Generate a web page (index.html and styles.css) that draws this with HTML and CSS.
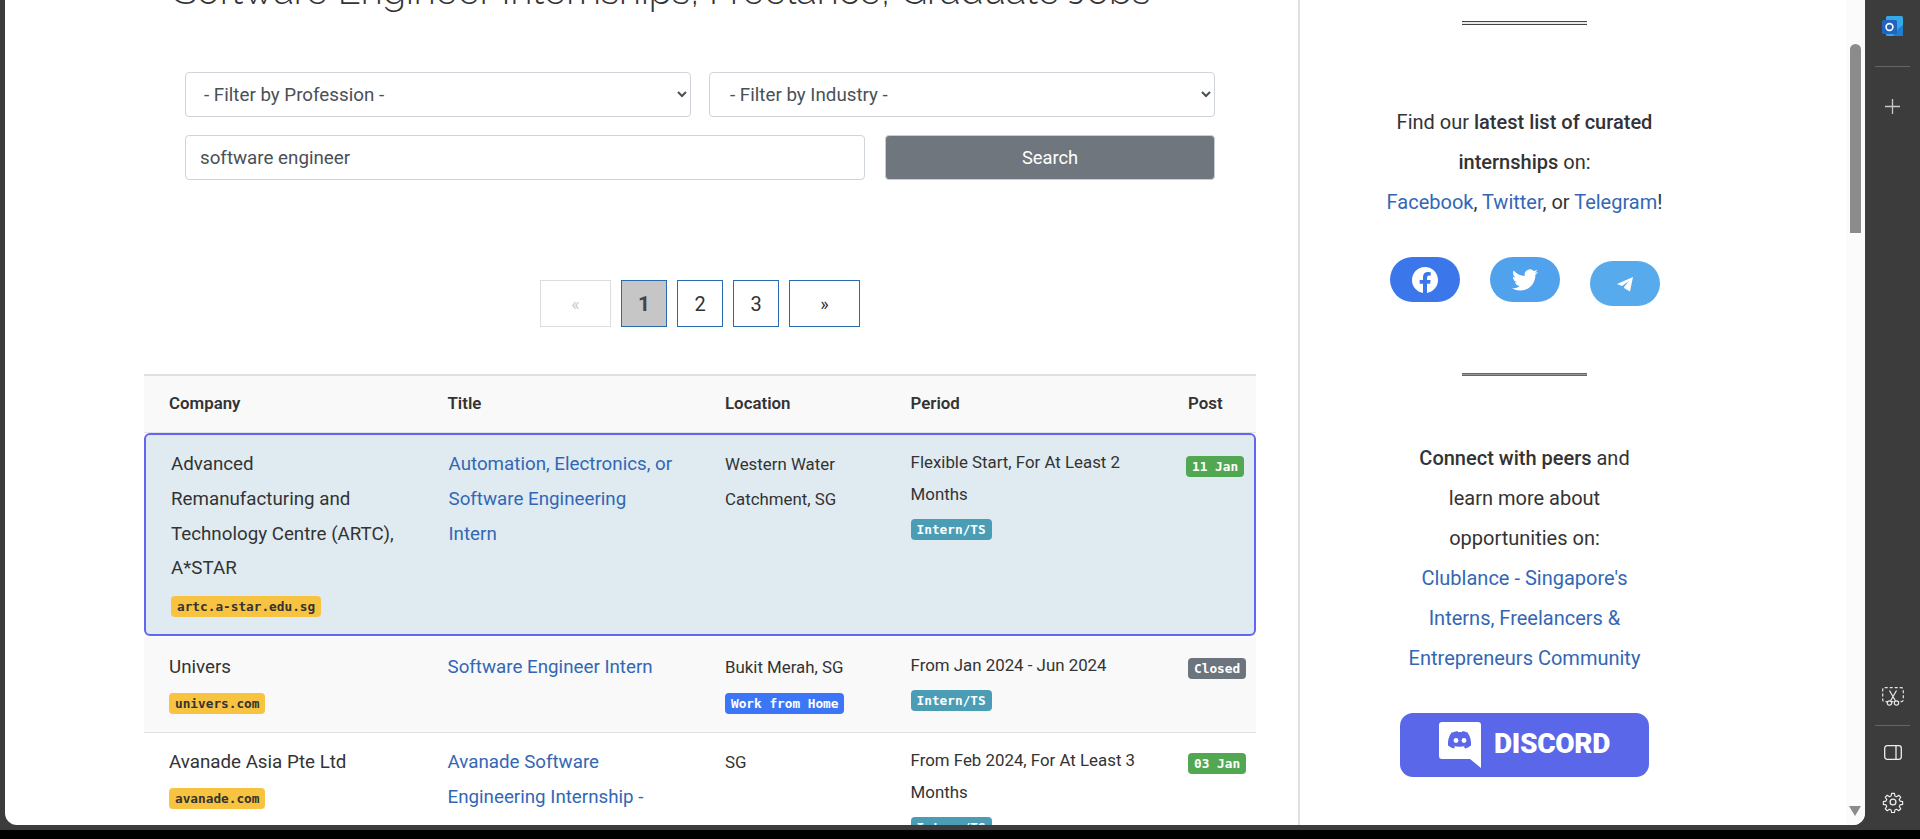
FILE: index.html
```html
<!DOCTYPE html>
<html lang="en">
<head>
<meta charset="utf-8">
<title>Software Engineer Internships, Freelance, Graduate Jobs</title>
<link rel="stylesheet" href="styles.css">
</head>
<body>
<div class="window">
  <div class="page">
    <main class="main">
      <h1 class="title">Software Engineer Internships, Freelance, Graduate Jobs</h1>
      <form class="filters">
        <div class="filter-row">
          <select class="field"><option>- Filter by Profession -</option></select>
          <select class="field field-right"><option>- Filter by Industry -</option></select>
        </div>
        <div class="search-row">
          <input class="field field-text" type="text" value="software engineer">
          <button class="search-btn" type="button">Search</button>
        </div>
      </form>
      <nav class="pager">
        <span class="pg pg-wide pg-off">«</span>
        <span class="pg pg-on">1</span>
        <span class="pg">2</span>
        <span class="pg">3</span>
        <span class="pg pg-wide">»</span>
      </nav>
      <section class="jobs">
        <div class="row head">
          <div>Company</div><div>Title</div><div>Location</div><div>Period</div><div>Post</div>
        </div>
        <div class="row hot">
          <div class="company">Advanced Remanufacturing and Technology Centre (ARTC), A*STAR<span class="tag tag-y">artc.a-star.edu.sg</span></div>
          <div class="job"><a href="#">Automation, Electronics, or Software Engineering Intern</a></div>
          <div class="loc">Western Water Catchment, SG</div>
          <div class="period">Flexible Start, For At Least 2 Months<span class="tag tag-c">Intern/TS</span></div>
          <div class="post"><span class="tag tag-g">11 Jan</span></div>
        </div>
        <div class="row alt">
          <div class="company">Univers<span class="tag tag-y">univers.com</span></div>
          <div class="job"><a href="#">Software Engineer Intern</a></div>
          <div class="loc">Bukit Merah, SG<span class="tag tag-b">Work from Home</span></div>
          <div class="period">From Jan 2024 - Jun 2024<span class="tag tag-c">Intern/TS</span></div>
          <div class="post"><span class="tag tag-k">Closed</span></div>
        </div>
        <div class="row">
          <div class="company">Avanade Asia Pte Ltd<span class="tag tag-y">avanade.com</span></div>
          <div class="job"><a href="#">Avanade Software Engineering Internship - Sap S/4 Hana</a></div>
          <div class="loc">SG</div>
          <div class="period">From Feb 2024, For At Least 3 Months<span class="tag tag-c">Intern/TS</span></div>
          <div class="post"><span class="tag tag-g">03 Jan</span></div>
        </div>
      </section>
    </main>
    <aside class="side">
      <hr class="rule">
      <div class="side-copy first">
        <p class="para">Find our <b>latest list of curated internships</b> on:</p>
        <p class="para"><a href="#">Facebook</a>, <a href="#">Twitter</a>, or <a href="#">Telegram</a>!</p>
      </div>
      <div class="socials">
        <a class="soc soc-fb" href="#" aria-label="Facebook">
          <svg width="26" height="26" viewBox="0 0 24 24"><path fill="#fff" d="M24 12.07C24 5.4 18.63 0 12 0S0 5.4 0 12.07c0 6.03 4.39 11.02 10.13 11.93v-8.44H7.08v-3.49h3.05V9.41c0-3.02 1.79-4.69 4.53-4.69 1.31 0 2.68.24 2.68.24v2.96h-1.51c-1.49 0-1.96.93-1.96 1.89v2.26h3.33l-.53 3.49h-2.8V24C19.61 23.09 24 18.1 24 12.07z"/></svg>
        </a>
        <a class="soc soc-tw" href="#" aria-label="Twitter">
          <svg width="26" height="26" viewBox="0 0 24 24"><path fill="#fff" d="M23.95 4.57a10 10 0 0 1-2.82.77 4.96 4.96 0 0 0 2.16-2.72c-.95.55-2 .96-3.13 1.18a4.92 4.92 0 0 0-8.38 4.48C7.69 8.1 4.07 6.13 1.64 3.16a4.82 4.82 0 0 0-.66 2.47c0 1.71.87 3.21 2.19 4.1a4.9 4.9 0 0 1-2.23-.62v.06a4.92 4.92 0 0 0 3.95 4.83 5 5 0 0 1-2.21.08 4.94 4.94 0 0 0 4.6 3.42A9.87 9.87 0 0 1 0 19.54a14 14 0 0 0 7.56 2.21c9.05 0 14-7.5 14-13.98 0-.21 0-.42-.02-.63a9.94 9.94 0 0 0 2.46-2.55z"/></svg>
        </a>
        <a class="soc soc-tg" href="#" aria-label="Telegram">
          <svg width="18" height="18" viewBox="0 0 18 18"><path fill="#fff" d="M17 2 1 9l5 2 7-5-5 6v1l6 3.5z"/></svg>
        </a>
      </div>
      <hr class="rule rule-low">
      <div class="side-copy second">
        <p class="para"><b>Connect with peers</b> and learn more about opportunities on:</p>
        <p class="para"><a href="#">Clublance - Singapore's Interns, Freelancers &amp; Entrepreneurs Community</a></p>
      </div>
      <a class="discord" href="#">
        <span class="bubble">
          <svg width="42" height="46" viewBox="0 0 42 46"><path fill="#fff" d="M3 0h36a3 3 0 0 1 3 3v43l-11-9H3a3 3 0 0 1-3-3V3a3 3 0 0 1 3-3z"/><path fill="#5a67e8" d="M13.500 10.500c2-.9 4-1.400 5-1.500l.6 1.200c1.300-.2 2.500-.2 3.800 0l.6-1.200c1 .1 3 .6 5 1.500 2.800 4 3.900 8.500 3.500 13-2 1.500-4 2.500-6 3l-1.200-2c1-.4 1.500-.7 2-1.100-4 1.900-8.500 1.900-12.600 0 .5.400 1 .700 2 1.100l-1.200 2c-2-.5-4-1.500-6-3-.4-4.500.7-9 3.500-13z"/><circle cx="17" cy="18.500" r="2.400" fill="#fff"/><circle cx="25" cy="18.500" r="2.400" fill="#fff"/></svg>
        </span>
        <span class="discord-word">DISCORD</span>
      </a>
    </aside>
    <div class="scrollbar">
      <span class="thumb"></span>
      <span class="arrow"></span>
    </div>
  </div>
  <div class="rail">
    <div class="rail-top">
      <svg width="22" height="21" viewBox="0 0 22 21"><rect x="4" y="0" width="17" height="20" rx="1.500" fill="#35a8e8"/><path d="M11 20h10v-11l-5 4z" fill="#1e7fd0"/><rect x="0" y="4" width="15" height="14" rx="1.500" fill="#2263bf"/><circle cx="7.500" cy="11" r="3.400" fill="none" stroke="#fff" stroke-width="1.600"/></svg>
      <span class="rail-line"></span>
      <svg width="15" height="15" viewBox="0 0 15 15"><path d="M7.500 0v15M0 7.500h15" stroke="#c9c9c9" stroke-width="1.300"/></svg>
    </div>
    <div class="rail-bottom">
      <svg width="22" height="19" viewBox="0 0 22 19" fill="none" stroke="#e6e6e6" stroke-width="1.200"><rect x=".7" y=".7" width="20.600" height="14" rx="2" stroke-dasharray="3 2"/><path d="M7.500 3.500 13.500 14M14.500 3.500 8.500 14"/><circle cx="7.500" cy="16" r="2.200" fill="#3c3c3c"/><circle cx="14.500" cy="16" r="2.200" fill="#3c3c3c"/></svg>
      <span class="rail-line"></span>
      <svg width="18" height="15" viewBox="0 0 18 15" fill="none" stroke="#eee" stroke-width="1.300"><rect x=".7" y=".7" width="16.600" height="13.600" rx="2.500"/><path d="M12 .7v13.600"/></svg>
      <svg width="22" height="22" viewBox="0 0 24 24" fill="none" stroke="#eee" stroke-width="1.400" stroke-linejoin="round"><circle cx="12" cy="12" r="3.200"/><path d="M10.300 1.500h3.400l.6 3.200 2 .9 2.700-1.800 2.400 2.400-1.800 2.700.9 2 3.200.6v3.400l-3.200.6-.9 2 1.800 2.700-2.400 2.400-2.700-1.800-2 .9-.6 3.200h-3.400l-.6-3.200-2-.9-2.700 1.800-2.400-2.400 1.800-2.700-.9-2-3.200-.6v-3.400l3.200-.6.9-2-1.800-2.700 2.400-2.400 2.700 1.800 2-.9z" transform="translate(1.200 1.200) scale(.9)"/></svg>
    </div>
  </div>
</div>
</body>
</html>
```
FILE: styles.css
```css
* { box-sizing: border-box; }
html, body { margin: 0; height: 100%; overflow: hidden; background: #000; }
body { font-family: Roboto, "Liberation Sans", sans-serif; font-size: 18.750px; color: #333; }
a { color: #3367b5; text-decoration: none; }

.window { height: 830px; display: flex; background: #3c3c3c; padding: 0 0 5px 5px; }
.page { flex: 0 0 1860px; height: 825px; background: #fff; display: flex; overflow: hidden; border-radius: 0 0 12px 12px; }

.main { flex: 0 0 1295px; padding-left: 139px; border-right: 2px solid #e0e0e0; height: 100%; overflow: hidden; }
.title { margin: -29px 0 0 30px; font-family: Raleway, Lato, sans-serif; font-weight: 300; font-size: 37.950px; line-height: 40px; color: #333; white-space: nowrap; }

.filters { margin: 61px 0 0 41px; width: 1030px; display: flex; flex-direction: column; gap: 18px; }
.filter-row { display: grid; grid-template-columns: 1fr 1fr; gap: 18px; }
.search-row { display: flex; gap: 20px; }
.field { height: 45px; flex: 1 1 0; min-width: 0; border: 1px solid #ced4da; border-radius: 4px; background: #fff; font: inherit; color: #495057; padding: 0 14px; }
.field-right { padding-left: 16px; }
.field-text { flex: 0 0 680px; }
.search-btn { flex: 1 1 0; height: 45px; background: #6f767d; color: #fff; border: 1px solid #c9ccd0; border-radius: 4px; font: inherit; font-size: 18.300px; }

.pager { margin-top: 100px; display: flex; justify-content: center; gap: 10px; width: 1112px; }
.pg { width: 46px; height: 47px; border: 1px solid #2a6ab0; display: flex; align-items: center; justify-content: center; color: #333; font-size: 20px; }
.pg-wide { width: 71px; font-size: 18px; }
.pg-off { border-color: #ddd; color: #ccc; }
.pg-on { background: #c6c6c6; font-weight: 700; font-size: 21px; color: #444; }

.jobs { margin-top: 47px; width: 1112px; border-top: 2px solid #e0e0e0; }
.row { display: grid; grid-template-columns: 278.500px 277.500px 185.600px 277.500px 1fr; padding: 12px 0 12px; border-bottom: 1px solid #e2e2e2; line-height: 34.800px; }
.row > div { padding-left: 25px; min-width: 0; padding-right: 25px; }
.head { height: 57px; background: #f9f9f9; padding: 0 0 2px; align-items: center; font-size: 16.850px; font-weight: 600; }
.alt { background: #f9f9f9; height: 96px; padding-top: 13px; }
.hot { height: 203px; margin-bottom: 1px; background: #dfebf1; border: 2px solid #6366f1; border-radius: 6px; padding: 12px 0 0; }
.hot .job { margin-left: -1px; }
.hot .loc { margin-left: -2px; }
.hot .period { margin-left: -2px; }
.hot .post { margin-left: -4px; }
.loc { font-size: 16.850px; }
.row > .loc { padding-right: 20px; }
.period { font-size: 16.850px; line-height: 31.500px; }
.row > .post { padding-right: 0; }

.tag { display: block; width: max-content; height: 21px; margin-top: 8.500px; padding: 0 6px; border-radius: 4px; font-family: "DejaVu Sans Mono", "Liberation Mono", monospace; font-size: 12.750px; line-height: 21px; font-weight: 700; }
.tag-y { background: #f7c341; color: #333; }
.tag-c { background: #4a9db5; color: #fff; margin-top: 8.500px; }
.tag-g { background: #52a852; color: #fff; margin-top: 7.800px; }
.tag-b { background: #3b76f6; color: #fff; }
.tag-k { background: #6c757d; color: #fff; margin-top: 7.800px; }
.hot .tag-g { margin-top: 9px; }
.hot .tag-y { margin-top: 9.500px; }

.side { flex: 0 0 449px; display: flex; flex-direction: column; align-items: center; height: 100%; padding: 21px 0 0 0; }
.rule { width: 125px; height: 4px; margin: 0; border: 0; border-top: 1px solid #444; border-bottom: 1px solid #444; background: #e8e8e8; flex: none; }
.rule-low { margin-top: 67px; height: 3px; background: #999; border-color: #666; }
.side-copy { width: 300px; text-align: center; font-size: 20px; line-height: 40px; }
.side-copy b { font-weight: 500; }
.side-copy.first { margin-top: 77px; }
.side-copy.second { margin-top: 62px; width: 250px; }
.para { margin: 0; }
.para a { white-space: nowrap; }
.second .para a { white-space: normal; }
.socials { margin-top: 35px; display: flex; gap: 30px; align-items: flex-start; }
.soc { width: 70px; height: 45px; border-radius: 23px; display: flex; align-items: center; justify-content: center; }
.soc-fb { background: #3b77ea; }
.soc-tw { background: #50a2ec; }
.soc-tg { background: #57aaeb; margin-top: 4px; }
.discord { margin-top: 35px; width: 249px; height: 64px; border-radius: 13px; background: #5a67e8; display: flex; align-items: flex-start; padding: 9px 0 0 39px; gap: 13px; }
.bubble { display: block; width: 42px; height: 46px; line-height: 0; }
.discord-word { font-family: Roboto, sans-serif; font-weight: 900; font-size: 28px; line-height: 20px; margin-top: 12px; color: #fff; letter-spacing: -.300px; }

.scrollbar { flex: 0 0 19px; margin-left: auto; background: #fbfbfb; position: relative; }
.thumb { position: absolute; left: 4px; top: 44px; width: 11px; height: 189px; border-radius: 6px 6px 0 0; background: #8b8b8b; }
.arrow { position: absolute; left: 3px; bottom: 9px; width: 0; height: 0; border-left: 6px solid transparent; border-right: 6px solid transparent; border-top: 10px solid #8b8b8b; }

.rail { flex: 1 1 auto; display: flex; flex-direction: column; justify-content: space-between; align-items: center; height: 825px; padding: 16px 0 12px; }
.rail-top, .rail-bottom { display: flex; flex-direction: column; align-items: center; }
.rail-line { width: 35px; height: 1px; background: #666; }
.rail-top .rail-line { margin: 29px 0 32px; }
.rail-bottom .rail-line { margin: 19px 0 19px; }
.rail-bottom svg:last-child { margin-top: 31px; }
```
